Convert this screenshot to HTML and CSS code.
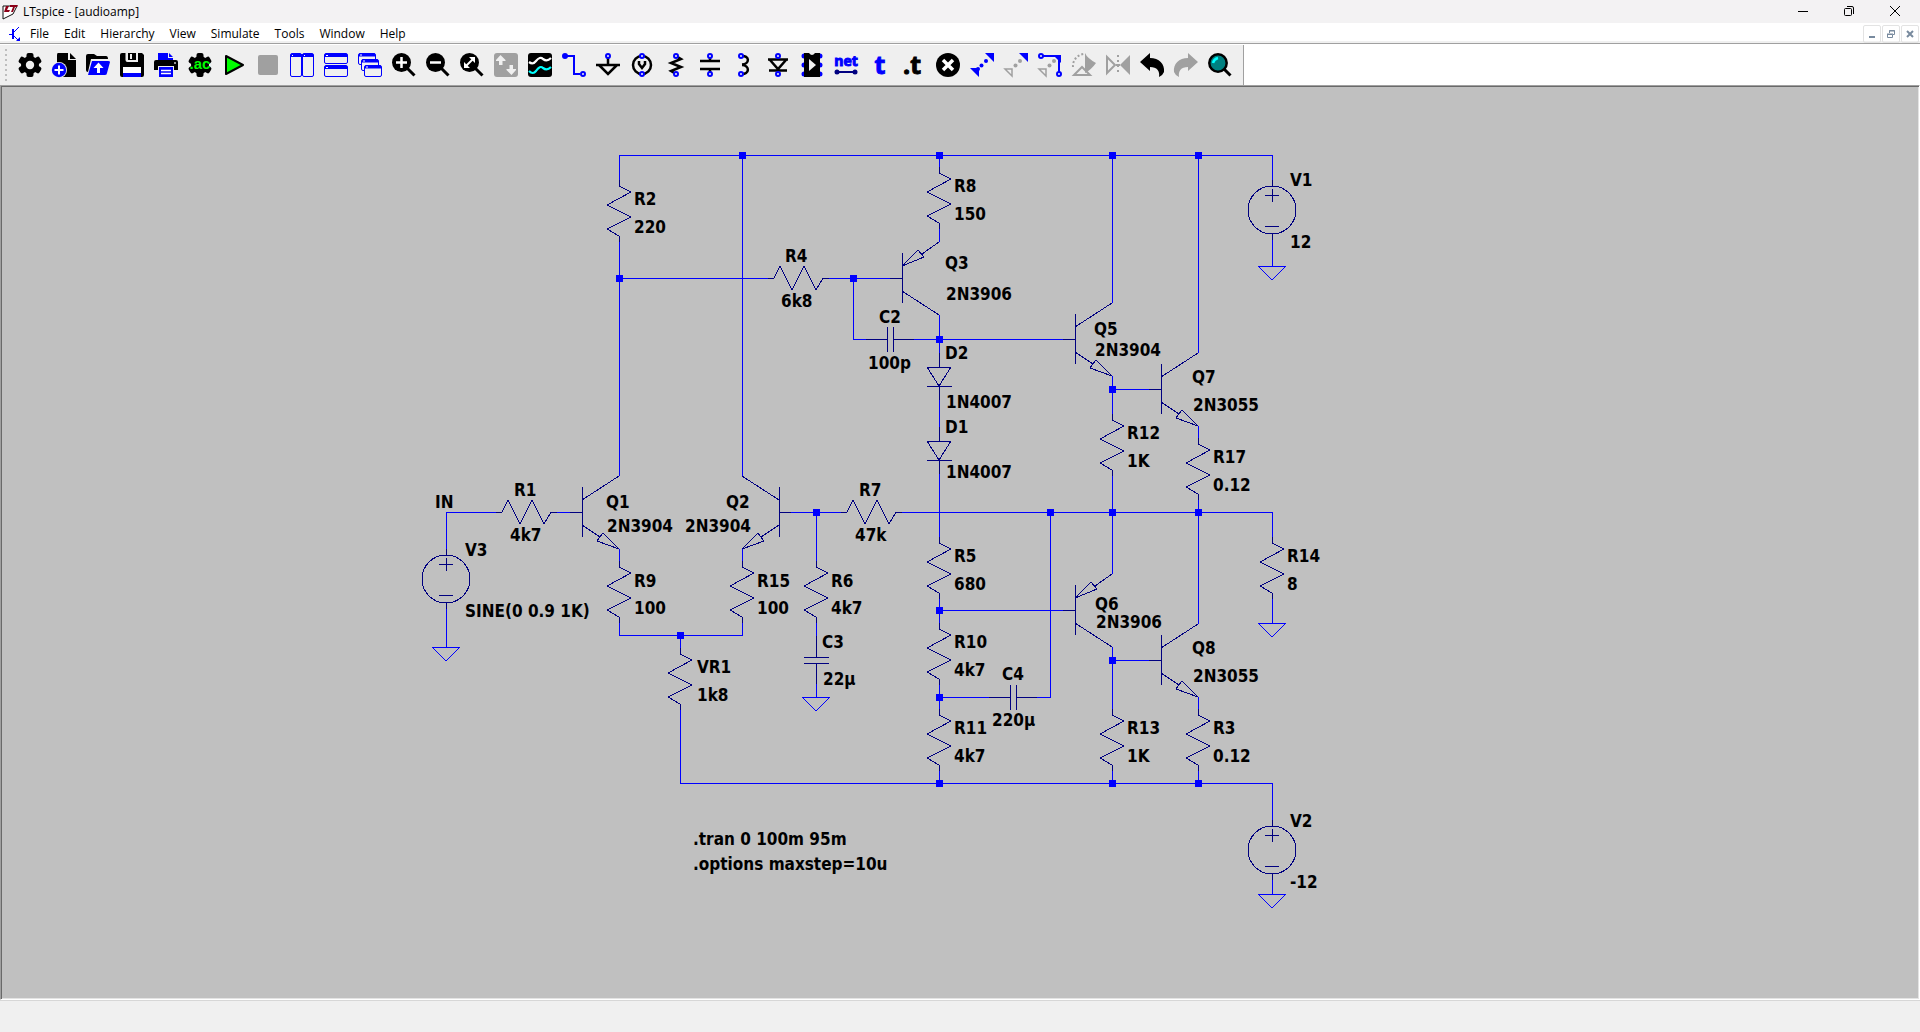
FILE: index.html
```html
<!DOCTYPE html>
<html lang="en">
<head>
<meta charset="utf-8">
<title>LTspice - [audioamp]</title>
<link rel="stylesheet" href="styles.css">
</head>
<body>
<div class="app">
  <header class="titlebar">
    <svg class="app-logo" width="16" height="16" viewBox="0 0 16 16" aria-hidden="true">
      <path d="M1 2 L15 2 L11 10 L1 15 Z" fill="#fff" stroke="#111" stroke-width="1"/>
      <path d="M4 2H7L5 6H8L7 8H2Z M8 1H16L15 3H13L11 8H9L11 3H8Z" fill="#8c0018"/>
    </svg>
    <h1 class="title">LTspice - [audioamp]</h1>
    <div class="window-controls">
      <button aria-label="Minimize"><svg width="12" height="12" viewBox="0 0 12 12"><path d="M1 6.5H11" stroke="#000"/></svg></button>
      <button aria-label="Restore"><svg width="12" height="12" viewBox="0 0 12 12" fill="none" stroke="#000"><rect x="1.500" y="3.500" width="7" height="7" rx="1"/><path d="M4 1.500H9Q10.500 1.500 10.500 3V9"/></svg></button>
      <button aria-label="Close"><svg width="12" height="12" viewBox="0 0 12 12"><path d="M1 1L11 11M11 1L1 11" stroke="#000"/></svg></button>
    </div>
  </header>

  <nav class="menubar">
    <svg class="doc-icon" width="14" height="18" viewBox="0 0 14 18" fill="none" stroke="#00f" aria-hidden="true">
      <path d="M1 9.500H5M6 7L11 2M6 11L11 16"/><path d="M12 16V12L8 16Z" fill="#00f" stroke="none"/><path d="M5 4V14" stroke-width="2"/>
    </svg>
    <button>File</button><button>Edit</button><button>Hierarchy</button><button>View</button><button>Simulate</button><button>Tools</button><button>Window</button><button>Help</button>
    <div class="document-controls">
      <button aria-label="Minimize document"><svg width="10" height="10" viewBox="0 0 10 10"><path d="M2 8H8" stroke="#788a9e" stroke-width="2"/></svg></button>
      <button aria-label="Restore document"><svg width="10" height="10" viewBox="0 0 10 10" fill="none" stroke="#788a9e"><path d="M1 5.500H6.500V8.500H1.500V5M3.500 4V1.500H8.500V5.500H7M3 2H9M1 5H7"/></svg></button>
      <button aria-label="Close document"><svg width="10" height="10" viewBox="0 0 10 10"><path d="M2 2L8 8M8 2L2 8" stroke="#788a9e" stroke-width="2"/></svg></button>
    </div>
  </nav>

  <div class="toolbar-row">
    <div class="toolbar" role="toolbar" aria-label="Schematic tools">
      <span class="grip"></span>
      <button aria-label="Settings"><svg viewBox="0 0 24 24"><g id="gear"><circle cx="12" cy="12" r="9"/><g id="lobe"><rect x="8.500" width="7" height="24" rx="2"/></g><use href="#lobe" transform="rotate(60 12 12)"/><use href="#lobe" transform="rotate(120 12 12)"/></g><circle cx="12" cy="12" r="4.200" fill="#f0f0f0"/></svg></button>
      <button aria-label="New schematic"><svg viewBox="0 0 24 24"><path d="M6 0H16V7H24V24H5V2Q5 0 6 0Z"/><path d="M18 0L24 6H18Z"/><circle cx="7" cy="17" r="8" fill="#f0f0f0"/><circle cx="7" cy="17" r="7.200" fill="#00f"/><path d="M7 12.500V21.500M2.500 17H11.500" stroke="#fff" stroke-width="2"/></svg></button>
      <button aria-label="Open"><svg viewBox="0 0 24 24"><path d="M0 3Q0 1 2 1H8L11 3H20Q22 3 22 6H5L2 19Q0 19 0 17Z"/><path d="M6 8H22Q24 8 24 9L21 20Q21 22 19 22H2Z" fill="#00f"/><path d="M12.500 9.500L17.500 15H14V20H11V15H7.500Z" fill="#fff"/></svg></button>
      <button aria-label="Save"><svg viewBox="0 0 24 24"><path d="M2 0H22L24 2V22Q24 24 22 24H2Q0 24 0 22V2Q0 0 2 0Z"/><path d="M5.500 0V7Q5.500 9 7.500 9H18V0H16V7H8V0Z" fill="#f0f0f0"/><path d="M11 1V6" stroke="#f0f0f0" stroke-width="2"/><path d="M3 14H21V20H3Z" fill="#fff"/><path d="M3 20H21V24H3Z" fill="#00f"/></svg></button>
      <button aria-label="Print"><svg viewBox="0 0 24 24"><path d="M4 0H14V5H19V8H4Z" fill="#00f"/><path d="M15 0L19 4H15Z" fill="#00f"/><path d="M2 7H22Q24 7 24 9V17H20V13H4V17H0V9Q0 7 2 7Z"/><path d="M5 14H19V24H5Z" fill="#00f"/><path d="M7 17.500H17M7 20.500H17" stroke="#fff" stroke-width="1.500"/><path d="M20 9H22V11H20Z" fill="#999"/></svg></button>
      <button aria-label="AC analysis"><svg viewBox="0 0 24 24" class="ac"><use href="#gear"/><text x="12" y="16">.ac</text></svg></button>
      <button aria-label="Run"><svg viewBox="0 0 24 24"><path d="M4 3L21 12L4 21Z" fill="#0f0" stroke="#000" stroke-width="2" stroke-linejoin="round"/></svg></button>
      <button aria-label="Stop" disabled><svg viewBox="0 0 24 24"><rect x="2" y="2" width="20" height="20" rx="2" fill="#a0a0a0"/></svg></button>
      <button aria-label="Tile vertically"><svg viewBox="0 0 24 24"><g fill="#f0f0f0" stroke="#00f"><rect x=".5" y=".5" width="11" height="23" rx="1.500"/><rect x="12.500" y=".5" width="11" height="23" rx="1.500"/></g><path d="M1 1H23V4H1Z" fill="#00f"/><path d="M2 2.500H3M14 2.500H15" stroke="#fff"/></svg></button>
      <button aria-label="Tile horizontally"><svg viewBox="0 0 24 24"><g fill="#f0f0f0" stroke="#00f"><rect x=".5" y=".5" width="23" height="10" rx="1.500"/><rect x=".5" y="12.500" width="23" height="11" rx="1.500"/></g><path d="M1 1H23V4H1ZM1 13H23V16H1Z" fill="#00f"/><path d="M2 2.500H4M2 14.500H4" stroke="#fff"/></svg></button>
      <button aria-label="Cascade"><svg viewBox="0 0 24 24"><g fill="#f0f0f0" stroke="#00f"><rect x=".5" y=".5" width="17" height="11" rx="1.500"/><path d="M1 2H17" stroke-width="3"/><rect x="3.500" y="6.500" width="17" height="11" rx="1.500"/><path d="M4 8H20" stroke-width="3"/><rect x="6.500" y="12.500" width="17" height="11" rx="1.500"/><path d="M7 14H23" stroke-width="3"/></g><path d="M2 2H4M5 8H7M8 14H10" stroke="#fff"/></svg></button>
      <button aria-label="Zoom in"><svg viewBox="0 0 24 24"><circle cx="9.500" cy="9.500" r="9.500"/><path d="M15 15L22.500 22.500" stroke="#000" stroke-width="3"/><path d="M9.500 4V15M4 9.500H15" stroke="#fff" stroke-width="2.500"/></svg></button>
      <button aria-label="Zoom out"><svg viewBox="0 0 24 24"><circle cx="9.500" cy="9.500" r="9.500"/><path d="M15 15L22.500 22.500" stroke="#000" stroke-width="3"/><path d="M4 9.500H15" stroke="#fff" stroke-width="2.500"/></svg></button>
      <button aria-label="Zoom to fit"><svg viewBox="0 0 24 24"><circle cx="9.500" cy="9.500" r="9.500"/><path d="M15 15L22.500 22.500" stroke="#000" stroke-width="3"/><path d="M6 13L13 6" stroke="#fff" stroke-width="2"/><path d="M9 4H15V10ZM4 9V15H10Z" fill="#fff"/></svg></button>
      <button aria-label="Autorange" disabled><svg viewBox="0 0 24 24"><rect width="24" height="24" rx="3" fill="#a0a0a0"/><path d="M6.500 2L11.500 7V8H8.500V12H5V8H2V7ZM17.500 22L22 17V16H19V12H15.500V16H12.500V17Z" fill="#f0f0f0"/></svg></button>
      <button aria-label="Waveforms"><svg viewBox="0 0 24 24"><rect width="24" height="24" rx="3"/><g fill="none" stroke-width="2.200"><path d="M1 9Q5 12 8 8Q12 3 15 6Q19 9 23 5" stroke="#fff"/><path d="M1 18Q5 22 8 18Q12 12 15 15Q19 18 23 14" stroke="#0ff"/></g></svg></button>
      <button aria-label="Wire"><svg viewBox="0 0 24 24" fill="none" stroke="#00f" stroke-width="2"><path d="M3 3H12V21H18"/><circle cx="3" cy="3" r="2" fill="#00f"/><circle cx="21" cy="21" r="2"/></svg></button>
      <button aria-label="Ground"><svg viewBox="0 0 24 24" fill="none" stroke="#000" stroke-width="2.500"><path d="M12 5V12M0 12H24M3 12L12 21L21 12"/><circle cx="12" cy="3" r="2" stroke="#00f" stroke-width="2" fill="#f0f0f0"/></svg></button>
      <button aria-label="Voltage source"><svg viewBox="0 0 24 24" fill="none" stroke="#000"><circle cx="12" cy="12" r="9" stroke-width="2.500"/><path d="M9 8V11L12 15L15 11V8" stroke-width="2.500"/><g class="pin"><circle cx="12" cy="3" r="2"/><circle cx="12" cy="21" r="2"/></g></svg></button>
      <button aria-label="Resistor"><svg viewBox="0 0 24 24" fill="none" stroke="#000" stroke-width="2.500"><path d="M12 3L17 6L7 10L17 14L7 18L12 21"/><g class="pin"><circle cx="12" cy="3" r="2"/><circle cx="12" cy="21" r="2"/></g></svg></button>
      <button aria-label="Capacitor"><svg viewBox="0 0 24 24" fill="none" stroke="#000" stroke-width="2.500"><path d="M2 8H22M2 16H22M12 4V8M12 16V20"/><g class="pin"><circle cx="12" cy="3" r="2"/><circle cx="12" cy="21" r="2"/></g></svg></button>
      <button aria-label="Inductor"><svg viewBox="0 0 24 24" fill="none" stroke="#000" stroke-width="2.500"><path d="M9 3C18 2 18 11 10 11.500M10 12C18 12 18 22 9 21"/><g class="pin"><circle cx="9" cy="3" r="2"/><circle cx="9" cy="21" r="2"/></g></svg></button>
      <button aria-label="Diode"><svg viewBox="0 0 24 24" fill="none" stroke="#000" stroke-width="2.500"><path d="M2 6.500H22M4 7L12 16L20 7M3 17.500H21"/><g class="pin"><circle cx="12" cy="3" r="2"/><circle cx="12" cy="21" r="2"/></g></svg></button>
      <button aria-label="Component"><svg viewBox="0 0 24 24"><path d="M4 3H5M4 12H5M4 21H5M19 3H20M19 12H20M19 21H20" stroke="#00f" stroke-width="5" stroke-linecap="round"/><path d="M4 0H9Q12 4 15 0H20V24H4Z"/><path d="M9 6L16 12L9 18Z" fill="#f0f0f0"/></svg></button>
      <button aria-label="Net name"><svg viewBox="0 0 24 24" class="net"><text x="12" y="13">net</text><path d="M2 19H22" stroke="#000080" stroke-width="2"/><circle cx="3" cy="19" r="2.500"/><circle cx="21" cy="19" r="2.500"/></svg></button>
      <button aria-label="Comment text"><svg viewBox="0 0 24 24" class="letter blue"><text x="12" y="21">t</text></svg></button>
      <button aria-label="SPICE directive"><svg viewBox="0 0 24 24" class="letter"><text x="10" y="21">.t</text></svg></button>
      <button aria-label="Delete"><svg viewBox="0 0 24 24"><circle cx="12" cy="12" r="12"/><path d="M7 7L17 17M17 7L7 17" stroke="#fff" stroke-width="3.500"/></svg></button>
      <button aria-label="Move"><svg viewBox="0 0 24 24" fill="#00f"><path d="M15 0H24V9ZM0 15H9V24Z"/><circle cx="16" cy="8" r="2"/><circle cx="11.500" cy="12.500" r="2"/><circle cx="8" cy="16" r="2"/></svg></button>
      <button aria-label="Duplicate"><svg viewBox="0 0 24 24" fill="#a0a0a0"><path d="M15 0H24V9Z" fill="#00f"/><path d="M1 16H8V23Z" fill="none" stroke="#a0a0a0" stroke-width="1.500"/><circle cx="16" cy="8" r="2"/><circle cx="11.500" cy="12.500" r="2"/></svg></button>
      <button aria-label="Drag"><svg viewBox="0 0 24 24" fill="#a0a0a0"><path d="M5 3H21V19" fill="none" stroke="#00f" stroke-width="2"/><path d="M15 2H23V10Z" fill="#00f"/><path d="M1 16H8V23Z" fill="none" stroke="#a0a0a0" stroke-width="1.500"/><circle cx="16" cy="8" r="2"/><circle cx="11.500" cy="12.500" r="2"/><g class="pin"><circle cx="3" cy="3" r="2"/><circle cx="21" cy="21" r="2"/></g></svg></button>
      <button aria-label="Rotate" disabled><svg viewBox="0 0 24 24" fill="none" stroke="#a0a0a0" stroke-width="2"><path d="M1 14A12 12 0 0 1 12 1" stroke-dasharray="2 2"/><path d="M13 0Q15 5 24 10Q19 17 13 20Z" fill="#a0a0a0" stroke="none"/><path d="M2 22H18L10 14Z"/></svg></button>
      <button aria-label="Mirror" disabled><svg viewBox="0 0 24 24" fill="none" stroke="#a0a0a0" stroke-width="2"><path d="M1 4V20L9 12Z"/><path d="M24 2V22L14 12Z" fill="#a0a0a0" stroke="none"/><path d="M12 2V22" stroke-dasharray="2 3"/><path d="M10 12H14"/></svg></button>
      <button aria-label="Undo"><svg viewBox="0 0 24 24"><path id="undo-arrow" d="M0 9L10 0V5C19 5 25 11 24 19Q23 22 19 24C20 18 17 14 10 14V18Z"/></svg></button>
      <button aria-label="Redo" disabled><svg viewBox="0 0 24 24" fill="#a0a0a0"><use href="#undo-arrow" transform="matrix(-1 0 0 1 24 0)"/></svg></button>
      <button aria-label="Search"><svg viewBox="0 0 24 24"><path d="M16 16L22.500 22.500" stroke="#000" stroke-width="3"/><circle cx="10" cy="10" r="8.700" fill="#008080" stroke="#000" stroke-width="2.500"/><path d="M5 10Q6 6 10 5" fill="none" stroke="#0ff" stroke-width="2.500"/></svg></button>
    </div>
  </div>

  <main class="workspace">
    <svg class="schematic" role="img" aria-label="Audio amplifier schematic">
      <defs>
        <path id="res" d="M0-6V0L12 6L-12 19L12 31L-12 43L0 50V56"/>
        <path id="res-h" d="M-6 0H0L6-12L18 12L30-12L42 12L49 0H55"/>
        <path id="npn" d="M0-25V25M-12 0H0M0-12L37-36M0 13L18 25M37 37L21 21L15 29Z"/>
        <path id="pnp" d="M0-25V25M-12 0H0M0 13L37 37M37-36L20-24M0-12L16-28L22-21Z"/>
        <path id="cap-h" d="M-24 0H-3M-3-12V13M3-12V13M3 0H24"/>
        <path id="cap-v" d="M0-24V-3M-12-3H13M-12 3H13M0 3V24"/>
        <path id="diode" d="M0-14V0M-12 0H12L0 19ZM-12 19H13M0 19V33"/>
        <g id="source"><circle r="24"/><path d="M0-30V-24M0 24V30M-7-15H7M0-21V-8M-7 16H7"/></g>
        <path id="gnd" d="M-14 0H14L0 14Z"/>
        <rect id="node" x="-3" y="-3" width="7" height="7"/>
      </defs>
      <g transform="translate(-1 -86)">
        <g class="wires">
          <path d="M619 180V155H1272V180M619 242V476M619 278H768M742 155V476M828 278H890M853 278V339H866M914 339H1063M939 155V167M939 229V242M939 315V353M939 400V427M939 474V537M1112 155V303M1198 155V353M1112 376V414M1112 389H1149M1198 426V438M1112 476V574M1198 500V624M901 512H1272V537M841 512H791M816 512V561M556 512H570M496 512H446V549M446 609V647M619 549V561M742 549V561M619 623V635H742V623M680 635V648M680 710V783H1272V820M816 623V636M816 684V697M939 599V623M939 610H1063M939 685V709M939 697H989M1037 697H1050V512M1112 647V709M1112 660H1149M1198 697V709M939 771V783M1112 771V783M1198 771V783M1272 599V623M1272 240V266M1272 880V894"/>
          <use href="#gnd" x="446" y="647"/><use href="#gnd" x="816" y="697"/><use href="#gnd" x="1272" y="266"/><use href="#gnd" x="1272" y="623"/><use href="#gnd" x="1272" y="894"/>
        </g>
        <g class="parts">
          <use href="#res" x="619" y="186"/><use href="#res" x="939" y="173"/><use href="#res" x="619" y="567"/><use href="#res" x="742" y="567"/><use href="#res" x="816" y="567"/><use href="#res" x="680" y="654"/><use href="#res" x="1112" y="420"/><use href="#res" x="1198" y="444"/><use href="#res" x="939" y="543"/><use href="#res" x="1272" y="543"/><use href="#res" x="939" y="629"/><use href="#res" x="939" y="715"/><use href="#res" x="1112" y="715"/><use href="#res" x="1198" y="715"/>
          <use href="#res-h" x="774" y="278"/><use href="#res-h" x="502" y="512"/><use href="#res-h" x="847" y="512"/>
          <use href="#npn" x="582" y="512"/><use href="#npn" transform="matrix(-1 0 0 1 779 512)"/><use href="#npn" x="1075" y="339"/><use href="#npn" x="1161" y="389"/><use href="#npn" x="1161" y="660"/>
          <use href="#pnp" x="902" y="278"/><use href="#pnp" x="1075" y="610"/>
          <use href="#cap-h" x="890" y="339"/><use href="#cap-h" x="1013" y="697"/><use href="#cap-v" x="816" y="660"/>
          <use href="#diode" x="939" y="367"/><use href="#diode" x="939" y="441"/>
          <use href="#source" x="446" y="579"/><use href="#source" x="1272" y="210"/><use href="#source" x="1272" y="850"/>
        </g>
        <g class="nodes">
          <use href="#node" x="742" y="155"/><use href="#node" x="939" y="155"/><use href="#node" x="1112" y="155"/><use href="#node" x="1198" y="155"/><use href="#node" x="619" y="278"/><use href="#node" x="853" y="278"/><use href="#node" x="939" y="339"/><use href="#node" x="1112" y="389"/><use href="#node" x="816" y="512"/><use href="#node" x="1050" y="512"/><use href="#node" x="1112" y="512"/><use href="#node" x="1198" y="512"/><use href="#node" x="939" y="610"/><use href="#node" x="680" y="635"/><use href="#node" x="1112" y="660"/><use href="#node" x="939" y="697"/><use href="#node" x="939" y="783"/><use href="#node" x="1112" y="783"/><use href="#node" x="1198" y="783"/>
        </g>
        <g class="labels" transform="translate(2 1)">
          <text x="632" y="204">R2</text><text x="632" y="232">220</text>
          <text x="783" y="261">R4</text><text x="779" y="306">6k8</text>
          <text x="952" y="191">R8</text><text x="952" y="219">150</text>
          <text x="943" y="268">Q3</text><text x="944" y="299">2N3906</text>
          <text x="877" y="322">C2</text><text x="866" y="368">100p</text>
          <text x="943" y="358">D2</text><text x="944" y="407">1N4007</text>
          <text x="943" y="432">D1</text><text x="944" y="477">1N4007</text>
          <text x="1092" y="334">Q5</text><text x="1093" y="355">2N3904</text>
          <text x="1190" y="382">Q7</text><text x="1191" y="410">2N3055</text>
          <text x="1125" y="438">R12</text><text x="1125" y="466">1K</text>
          <text x="1211" y="462">R17</text><text x="1211" y="490">0.12</text>
          <text x="857" y="495">R7</text><text x="853" y="540">47k</text>
          <text x="952" y="561">R5</text><text x="952" y="589">680</text>
          <text x="1285" y="561">R14</text><text x="1285" y="589">8</text>
          <text x="1093" y="609">Q6</text><text x="1094" y="627">2N3906</text>
          <text x="952" y="647">R10</text><text x="952" y="675">4k7</text>
          <text x="1000" y="679">C4</text><text x="990" y="725">220µ</text>
          <text x="952" y="733">R11</text><text x="952" y="761">4k7</text>
          <text x="1190" y="653">Q8</text><text x="1191" y="681">2N3055</text>
          <text x="1125" y="733">R13</text><text x="1125" y="761">1K</text>
          <text x="1211" y="733">R3</text><text x="1211" y="761">0.12</text>
          <text x="433" y="507">IN</text>
          <text x="463" y="555">V3</text><text x="463" y="616">SINE(0 0.9 1K)</text>
          <text x="512" y="495">R1</text><text x="508" y="540">4k7</text>
          <text x="604" y="507">Q1</text><text x="605" y="531">2N3904</text>
          <text x="724" y="507">Q2</text><text x="683" y="531">2N3904</text>
          <text x="632" y="586">R9</text><text x="632" y="613">100</text>
          <text x="755" y="586">R15</text><text x="755" y="613">100</text>
          <text x="829" y="586">R6</text><text x="829" y="613">4k7</text>
          <text x="820" y="647">C3</text><text x="821" y="684">22µ</text>
          <text x="695" y="672">VR1</text><text x="695" y="700">1k8</text>
          <text x="1288" y="185">V1</text><text x="1288" y="247">12</text>
          <text x="1288" y="826">V2</text><text x="1288" y="887">-12</text>
          <text x="691" y="844">.tran 0 100m 95m</text>
          <text x="691" y="869">.options maxstep=10u</text>
        </g>
      </g>
    </svg>
  </main>
  <footer class="statusbar"></footer>
</div>
</body>
</html>
```

FILE: styles.css
```css
* { box-sizing: border-box; }
html, body { height: 100%; }
body { margin: 0; overflow: hidden; }
button { border: 0; padding: 0; margin: 0; background: transparent; font: inherit; color: inherit; }
svg { display: block; }

.app {
  display: flex;
  flex-direction: column;
  height: 100%;
  background: #fff;
  color: #000;
  font: 12px/16px "Open Sans", "Noto Sans", sans-serif;
}

.titlebar {
  display: flex;
  align-items: center;
  height: 23px;
  padding: 0 2px;
  background: #f3f2f3;
}
.title { margin: 0 0 0 5px; font-size: 12px; font-weight: 400; }
.window-controls { display: flex; align-self: stretch; margin-left: auto; }
.window-controls button { display: grid; place-items: center; width: 46px; padding-bottom: 2px; }

.menubar {
  display: flex;
  align-items: center;
  gap: 15px;
  height: 21px;
  padding: 1px 1px 0 8px;
  border-bottom: 1px solid #a0a0a0;
  box-shadow: inset 0 -2px #f0f0f0;
}
.doc-icon { margin-right: -7px; }
.document-controls { display: flex; gap: 1px; margin-left: auto; }
.document-controls button {
  display: grid;
  place-items: center;
  width: 18px;
  height: 18px;
  border: 1px solid #e3e3e3;
  border-radius: 2px;
}

.toolbar-row { display: flex; padding-top: 1px; }
.toolbar {
  display: flex;
  align-items: center;
  height: 40px;
  padding-right: 6px;
  background: #efefef;
  border-right: 1px solid #a0a0a0;
}
.toolbar button { display: grid; place-items: center; width: 34px; height: 40px; }
.toolbar svg { width: 24px; height: 24px; overflow: visible; }
.grip {
  width: 2px;
  height: 32px;
  margin: 0 6px 0 5px;
  background: repeating-linear-gradient(#bdbdbd 0 2px, transparent 2px 5px);
}
.pin { fill: #f0f0f0; stroke: #00f; stroke-width: 2px; }
.ac text {
  font: bold 15px "Liberation Sans", Arial, sans-serif;
  text-anchor: middle;
  fill: #0f0;
}
.net { fill: #000080; }
.net text { font: bold 14px "Open Sans", sans-serif; text-anchor: middle; fill: #00f; stroke: #00f; }
.letter text { font: bold 25px "Open Sans", sans-serif; text-anchor: middle; stroke: currentColor; fill: currentColor; }
.blue { color: #00f; }

.workspace {
  flex: 1;
  min-height: 0;
  background: #c0c0c0;
  border: 1px solid #a0a0a0;
  border-right-color: #fff;
  border-bottom-color: #fff;
  box-shadow: inset 1px 1px #696969, inset -1px -1px #e3e3e3;
}
.schematic { width: 100%; height: 100%; }
.wires, .parts { fill: none; stroke-width: 1px; shape-rendering: crispEdges; }
.wires { stroke: #00f; }
.parts { stroke: #000080; }
.nodes { fill: #00f; }
.labels { font: bold 17px "DejaVu Sans Condensed", "DejaVu Sans", sans-serif; fill: #000; }

.statusbar { height: 32px; background: #f0f0f0; border-top: 1px solid #d7d7d7; }
```
